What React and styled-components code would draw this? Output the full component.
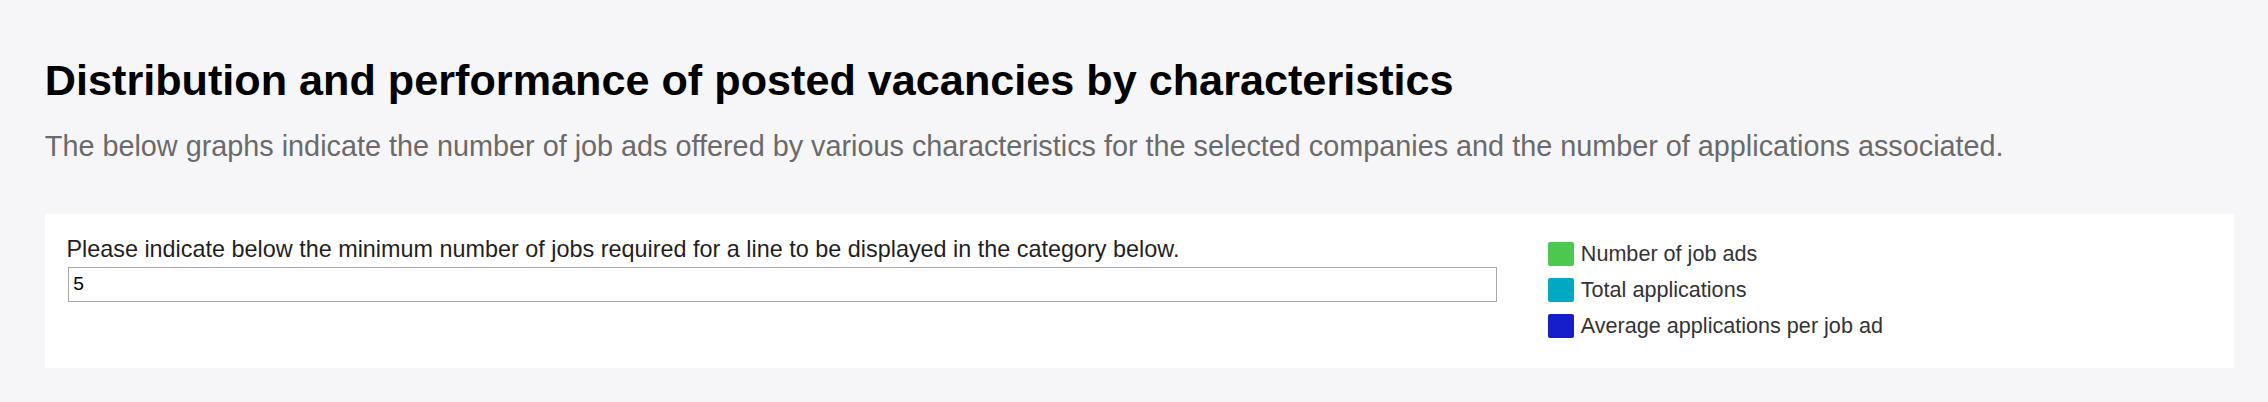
import React from 'react';
import styled, { createGlobalStyle } from 'styled-components';

const GlobalStyle = createGlobalStyle`
  html, body {
    margin: 0;
    padding: 0;
    background: #f6f6f8;
  }
  body {
    font-family: "Liberation Sans", Arial, sans-serif;
  }
`;

const legendItems = [
  { label: 'Number of job ads', color: '#4bc84f' },
  { label: 'Total applications', color: '#00a9c3' },
  { label: 'Average applications per job ad', color: '#161ecb' },
];

const Page = styled.div`
  padding: 55px 34px 0 44.8px;
`;

const Title = styled.h1`
  margin: 0;
  font-size: 43.2px;
  line-height: 1.2;
  font-weight: 700;
  color: #000;
`;

const Subtitle = styled.p`
  margin: 22px 0 0;
  font-size: 28.8px;
  line-height: 1.2;
  color: #6a6a6a;
`;

const Card = styled.section`
  margin-top: 50.6px;
  background: #fff;
  padding: 21.6px 21.6px 24px;
  display: flex;
  align-items: flex-start;
  gap: 50.4px;
`;

const FilterColumn = styled.div`
  flex: 0 0 1431px;
  display: flex;
  flex-direction: column;
`;

const FilterLabel = styled.label`
  font-size: 23.4px;
  line-height: 26px;
  color: #1f1f1f;
`;

const NumberInput = styled.input`
  box-sizing: border-box;
  margin: 5px 0 0 1.4px;
  width: calc(100% - 1.4px);
  height: 35px;
  padding: 0 4.5px;
  border: 1.5px solid #a8a8a8;
  border-radius: 0;
  font-family: "Liberation Sans", Arial, sans-serif;
  font-size: 19.2px;
  color: #000;
  background: #fff;
  outline: none;
`;

const Legend = styled.ul`
  list-style: none;
  margin: 0;
  padding: 0;
  display: flex;
  flex-direction: column;
`;

const LegendRow = styled.li`
  height: 36px;
  display: flex;
  align-items: center;
  gap: 7px;
  font-size: 21.6px;
  color: #333;
`;

const Swatch = styled.span`
  flex: none;
  width: 26px;
  height: 24px;
  border-radius: 2px;
  background: ${(p) => p.$color};
`;

export default function App() {
  return (
    <>
      <GlobalStyle />
      <Page>
        <Title>Distribution and performance of posted vacancies by characteristics</Title>
        <Subtitle>
          The below graphs indicate the number of job ads offered by various characteristics for the
          selected companies and the number of applications associated.
        </Subtitle>
        <Card>
          <FilterColumn>
            <FilterLabel htmlFor="min-jobs">
              Please indicate below the minimum number of jobs required for a line to be displayed in the category below.
            </FilterLabel>
            <NumberInput id="min-jobs" type="text" defaultValue="5" />
          </FilterColumn>
          <Legend>
            {legendItems.map((item) => (
              <LegendRow key={item.label}>
                <Swatch $color={item.color} />
                {item.label}
              </LegendRow>
            ))}
          </Legend>
        </Card>
      </Page>
    </>
  );
}
